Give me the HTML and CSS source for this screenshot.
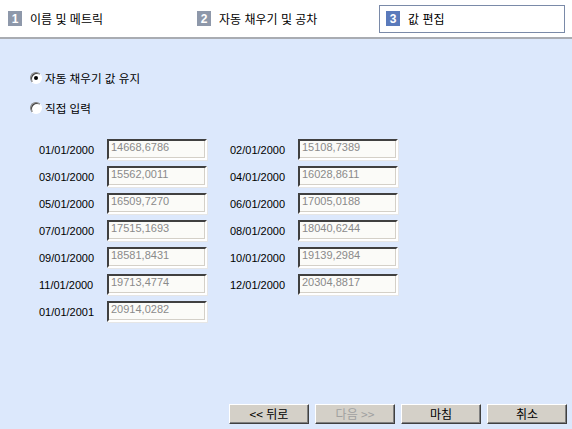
FILE: index.html
```html
<!DOCTYPE html>
<html lang="ko">
<head>
<meta charset="utf-8">
<link rel="stylesheet" href="styles.css">
</head>
<body>
<div class="page">
  <div class="header">
    <div class="step step1"><span class="badge">1</span><span class="step-text">이름 및 메트릭</span></div>
    <div class="step step2"><span class="badge">2</span><span class="step-text">자동 채우기 및 공차</span></div>
    <div class="step step3 active"><span class="badge">3</span><span class="step-text">값 편집</span></div>
  </div>
  <div class="content">
    <div class="options">
      <div class="option"><span class="radio checked"></span><span class="opt-text">자동 채우기 값 유지</span></div>
      <div class="option"><span class="radio"></span><span class="opt-text">직접 입력</span></div>
    </div>
    <div class="values">
      <span class="lbl">01/01/2000</span><span class="field">14668,6786</span><span></span>
      <span class="lbl">02/01/2000</span><span class="field">15108,7389</span>
      <span class="lbl">03/01/2000</span><span class="field">15562,0011</span><span></span>
      <span class="lbl">04/01/2000</span><span class="field">16028,8611</span>
      <span class="lbl">05/01/2000</span><span class="field">16509,7270</span><span></span>
      <span class="lbl">06/01/2000</span><span class="field">17005,0188</span>
      <span class="lbl">07/01/2000</span><span class="field">17515,1693</span><span></span>
      <span class="lbl">08/01/2000</span><span class="field">18040,6244</span>
      <span class="lbl">09/01/2000</span><span class="field">18581,8431</span><span></span>
      <span class="lbl">10/01/2000</span><span class="field">19139,2984</span>
      <span class="lbl">11/01/2000</span><span class="field">19713,4774</span><span></span>
      <span class="lbl">12/01/2000</span><span class="field">20304,8817</span>
      <span class="lbl">01/01/2001</span><span class="field">20914,0282</span>
    </div>
  </div>
  <div class="buttons">
    <button class="btn">&lt;&lt; 뒤로</button>
    <button class="btn disabled">다음 &gt;&gt;</button>
    <button class="btn">마침</button>
    <button class="btn">취소</button>
  </div>
</div>
</body>
</html>
```
FILE: styles.css
```css
html, body {
  margin: 0;
  padding: 0;
}
body {
  background: #dce8fc;
  font-family: "Noto Sans CJK KR", "Liberation Sans", sans-serif;
  font-size: 12px;
  color: #000;
}
.page {
  width: 572px;
  height: 429px;
  display: flex;
  flex-direction: column;
}
.header {
  height: 37px;
  background: #fff;
  border-bottom: 2px solid #a9acb2;
  display: flex;
  align-items: center;
  padding-left: 8px;
  box-sizing: content-box;
}
.step {
  display: flex;
  align-items: center;
  height: 28px;
}
.step1 { width: 189px; }
.step2 { width: 171px; }
.step3 {
  border: 1px solid #7a8aa8;
  padding-left: 6px;
  margin-left: 11px;
  box-sizing: border-box;
  width: 186px;
}
.badge {
  width: 14px;
  height: 15px;
  background: #8e98aa;
  color: #fff;
  font-family: "Liberation Sans", sans-serif;
  font-weight: bold;
  font-size: 12px;
  display: flex;
  align-items: center;
  justify-content: center;
  margin-right: 8px;
}
.active .badge {
  background: #5a7abb;
}
.step-text {
  font-size: 12px;
  line-height: 15px;
}
.content {
  flex: 1;
  padding-left: 30px;
  padding-top: 32px;
}
.options {
  display: flex;
  flex-direction: column;
  gap: 16px;
}
.option {
  display: flex;
  align-items: center;
  height: 14px;
}
.radio {
  width: 12px;
  height: 12px;
  border-radius: 50%;
  box-sizing: border-box;
  border: 1px solid;
  border-color: #808080 #ffffff #ffffff #808080;
  background: #fff;
  box-shadow: inset 1px 1px 0 #404040;
  margin-right: 3px;
  display: flex;
  align-items: center;
  justify-content: center;
}
.radio.checked::after {
  content: "";
  width: 4px;
  height: 4px;
  border-radius: 50%;
  background: #000;
}
.opt-text {
  font-size: 11.6px;
  line-height: 14px;
}
.values {
  margin-top: 24px;
  margin-left: 9px;
  display: grid;
  grid-template-columns: 68px 100px 23px 68px 100px;
  grid-auto-rows: 21px;
  row-gap: 6px;
  align-items: center;
}
.lbl {
  font-family: "Liberation Sans", Arial, sans-serif;
  font-size: 11px;
  padding-top: 1px;
}
.field {
  height: 21px;
  box-sizing: border-box;
  border: 2px solid;
  border-color: #404040 #ffffff #ffffff #404040;
  box-shadow: inset -1px -1px 0 #d4d0c8, 1px 1px 0 #e6e6e6;
  background: #fbfbf8;
  color: #8a8a8a;
  font-family: "Liberation Sans", Arial, sans-serif;
  font-size: 11px;
  padding-left: 2px;
  line-height: 13px;
  display: flex;
  align-items: flex-start;
}
.buttons {
  display: flex;
  justify-content: flex-end;
  gap: 6px;
  padding-right: 5px;
  padding-bottom: 5px;
}
.btn {
  width: 80px;
  height: 20px;
  background: #d4d0c8;
  border: 1px solid;
  border-color: #ffffff #404040 #404040 #ffffff;
  box-shadow: inset -1px -1px 0 #808080;
  font-family: "Noto Sans CJK KR", sans-serif;
  font-size: 12px;
  padding: 0;
  color: #000;
  line-height: 16px;
}
.btn.disabled {
  color: #a0a0a0;
}
```
